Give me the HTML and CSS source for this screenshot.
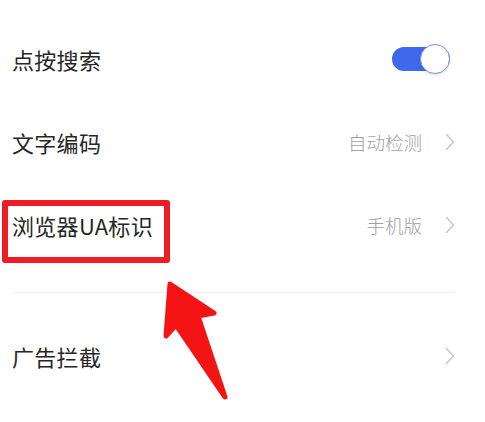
FILE: index.html
```html
<html lang="zh-CN">
<head>
    <meta charset="UTF-8">
    <meta name="viewport" content="width=device-width, initial-scale=1.0">
    <title>浏览器设置</title>
    <link rel="stylesheet" href="styles.css">
</head>
<body>

<div class="settings">
    <div class="group">
        <div class="row">
            <span class="label">点按搜索</span>
            <div class="switch on"><div class="knob"></div></div>
        </div>
        <div class="row">
            <span class="label">文字编码</span>
            <span class="value">自动检测</span>
            <svg class="chevron" viewBox="0 0 10 18"><path d="M1.5 1.5 L8.5 9 L1.5 16.5"/></svg>
        </div>
        <div class="row">
            <span class="label">浏览器UA标识</span>
            <span class="value">手机版</span>
            <svg class="chevron" viewBox="0 0 10 18"><path d="M1.5 1.5 L8.5 9 L1.5 16.5"/></svg>
        </div>
    </div>

    <div class="group">
        <div class="row">
            <span class="label">广告拦截</span>
            <span class="value"></span>
            <svg class="chevron" viewBox="0 0 10 18"><path d="M1.5 1.5 L8.5 9 L1.5 16.5"/></svg>
        </div>
    </div>
</div>

<!-- annotation layer drawn over the screenshot -->
<div class="mark-box"></div>
<svg class="mark-arrow" viewBox="0 0 485 422">
    <polygon points="170,284 214,313 198,316 225,397 176,325 166,336"/>
</svg>

</body>
</html>
```

FILE: styles.css
```css
body {
    margin: 0;
    background-color: #fff;
    font-family: "Noto Sans CJK SC", "Noto Sans", sans-serif;
    color: #262626;
    position: relative;
    height: 422px;
    overflow: hidden;
}

.settings {
    padding: 17px 30px 0 12px;
}

.group {
    padding-bottom: 26px;
}

.group + .group {
    border-top: 1px solid #efefef;
    padding-top: 21px;
}

.row {
    display: flex;
    align-items: center;
    height: 83px;
}

.label {
    flex: 1;
    font-size: 22px;
    letter-spacing: 0.3px;
}

.value {
    font-size: 18.5px;
    font-weight: 300;
    color: #a0a0a0;
    margin-right: 23px;
}

.chevron {
    width: 10px;
    height: 18px;
    fill: none;
    stroke: #c6c6c6;
    stroke-width: 1.4;
    stroke-linecap: round;
    stroke-linejoin: round;
}

/* Toggle switch */
.switch {
    position: relative;
    width: 58px;
    height: 24px;
    margin-right: 5px;
    border-radius: 12px;
    background-color: #4068ec;
}

.knob {
    position: absolute;
    top: -3px;
    right: 0;
    width: 28px;
    height: 28px;
    border-radius: 50%;
    background-color: #fff;
    border: 1px solid #7e93d8;
    box-shadow: 0 1px 3px rgba(0, 0, 0, 0.15);
}

/* Red annotation */
.mark-box {
    position: absolute;
    left: 2px;
    top: 200px;
    width: 156px;
    height: 51px;
    border: 6px solid #ee1c25;
    border-radius: 3px;
}

.mark-arrow {
    position: absolute;
    left: 0;
    top: 0;
    width: 485px;
    height: 422px;
}

.mark-arrow polygon {
    fill: #f41414;
    stroke: #f41414;
    stroke-width: 5;
    stroke-linejoin: round;
}
```
